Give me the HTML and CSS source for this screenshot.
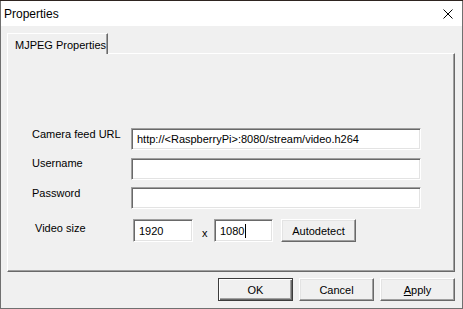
FILE: index.html
```html
<!DOCTYPE html>
<html lang="en">
<head>
  <meta charset="UTF-8">
  <title>Properties</title>
  <link rel="stylesheet" href="styles.css">
</head>
<body>
  <div class="window">
    <div class="titlebar">
      <span class="title">Properties</span>
      <svg class="close" width="10" height="10" viewBox="0 0 10 10">
        <path d="M0.5 0.5 L9.5 9.5 M9.5 0.5 L0.5 9.5" stroke="#000" stroke-width="1" fill="none"/>
      </svg>
    </div>

    <div class="client">
      <div class="tabs">
        <div class="tab">MJPEG Properties</div>
      </div>

      <div class="panel">
        <div class="row">
          <span class="label">Camera feed URL</span>
          <div class="field wide">http://&lt;RaspberryPi&gt;:8080/stream/video.h264</div>
        </div>
        <div class="row">
          <span class="label lift">Username</span>
          <div class="field wide"></div>
        </div>
        <div class="row row-tight">
          <span class="label">Password</span>
          <div class="field wide"></div>
        </div>
        <div class="row row-video">
          <span class="label label-video">Video size</span>
          <div class="field num">1920</div>
          <span class="times">x</span>
          <div class="field num small">1080<span class="caret"></span></div>
          <button class="btn autodetect">Autodetect</button>
        </div>
      </div>

      <div class="footer">
        <button class="btn default">OK</button>
        <button class="btn">Cancel</button>
        <button class="btn"><u>A</u>pply</button>
      </div>
    </div>
  </div>
</body>
</html>
```

FILE: styles.css
```css
html, body {
  margin: 0;
  padding: 0;
  background: #2e2420;
  height: 100%;
  overflow: hidden;
}

body {
  padding-top: 1px;
  font-family: "Liberation Sans", Arial, sans-serif;
  font-size: 11px;
  line-height: 13px;
  color: #000;
}

.window {
  box-sizing: border-box;
  width: 463px;
  height: 308px;
  background: #f0f0f0;
  border: 1px solid #707070;
  border-top: none;
  display: flex;
  flex-direction: column;
}

.titlebar {
  height: 25px;
  background: #fff;
  display: flex;
  align-items: center;
  justify-content: space-between;
  padding: 0 9px 0 3px;
}

.title {
  font-size: 12px;
  margin-top: 1px;
}

.close {
  display: block;
}

.client {
  padding: 7px 7px 0 6px;
}

.tabs {
  display: flex;
}

.tab {
  position: relative;
  z-index: 1;
  box-sizing: border-box;
  width: 101px;
  height: 21px;
  margin-bottom: -1px;
  padding: 5px 0 0 7px;
  background: #f0f0f0;
  border-top: 1px solid #fff;
  border-left: 1px solid #fff;
  border-right: 1px solid #696969;
  box-shadow: inset -1px 0 #a0a0a0;
}

.panel {
  box-sizing: border-box;
  height: 219px;
  padding: 74px 0 0 24px;
  border-top: 1px solid #fff;
  border-left: 1px solid #fff;
  border-right: 1px solid #696969;
  border-bottom: 1px solid #696969;
  box-shadow: inset -1px -1px #a0a0a0;
}

.row {
  display: flex;
  align-items: flex-start;
  margin-bottom: 8px;
}

.row-tight {
  margin-top: -1px;
  margin-bottom: 10px;
}

.label {
  width: 99px;
  flex: none;
}

.lift {
  margin-top: -1px;
}

.label-video {
  width: 98px;
  padding-left: 3px;
  margin-top: 3px;
}

.field {
  box-sizing: border-box;
  height: 22px;
  padding: 1px 5px 0;
  background: #fff;
  border: 1px solid;
  border-color: #a0a0a0 #fff #fff #a0a0a0;
  box-shadow: inset 1px 1px #696969, inset -1px -1px #e3e3e3;
  display: flex;
  align-items: center;
  white-space: nowrap;
}

.wide {
  width: 290px;
}

.num {
  width: 60px;
  height: 23px;
}

.small {
  width: 59px;
}

.times {
  width: 12px;
  padding: 8px 0 0 9px;
}

.caret {
  display: inline-block;
  width: 1px;
  height: 14px;
  background: #000;
  margin-left: 1px;
}

.btn {
  box-sizing: border-box;
  width: 75px;
  height: 23px;
  padding: 0;
  font-family: "Liberation Sans", Arial, sans-serif;
  font-size: 11px;
  color: #000;
  background: #f0f0f0;
  border: 1px solid;
  border-color: #fff #696969 #696969 #fff;
  box-shadow: inset -1px -1px #a0a0a0, inset 1px 1px #e3e3e3;
}

.autodetect {
  margin-left: 8px;
}

.default {
  border-color: #3c3c3c;
  box-shadow: inset 1px 1px #fff, inset -1px -1px #696969, inset -2px -2px #a0a0a0;
}

.btn u {
  text-decoration: underline;
}

.footer {
  display: flex;
  justify-content: flex-end;
  gap: 6px;
  margin-top: 6px;
}
```
